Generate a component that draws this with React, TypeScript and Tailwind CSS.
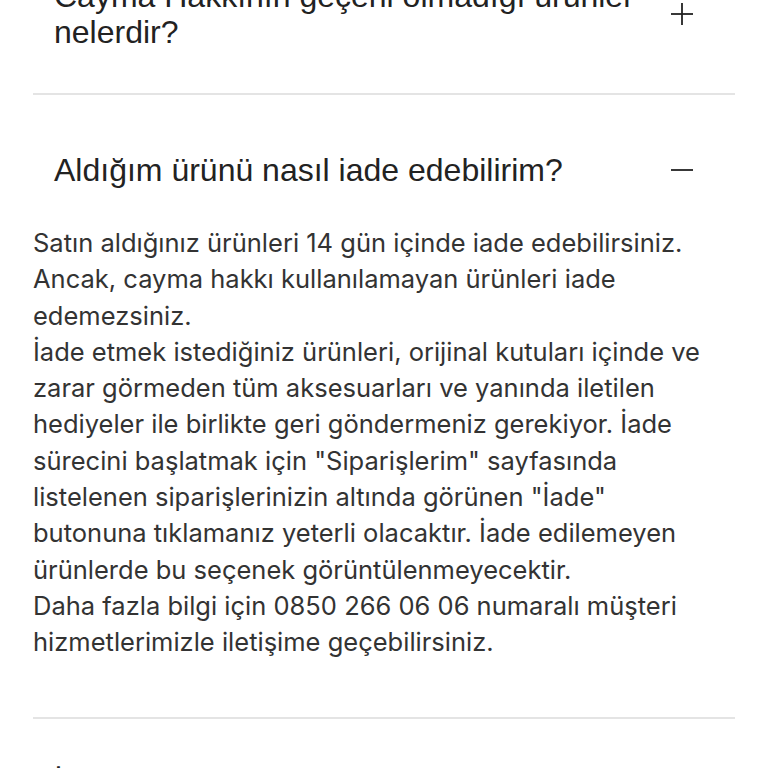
const body = [
  "Satın aldığınız ürünleri 14 gün içinde iade edebilirsiniz. Ancak, cayma hakkı kullanılamayan ürünleri iade edemezsiniz.",
  'İade etmek istediğiniz ürünleri, orijinal kutuları içinde ve zarar görmeden tüm aksesuarları ve yanında iletilen hediyeler ile birlikte geri göndermeniz gerekiyor. İade sürecini başlatmak için "Siparişlerim" sayfasında listelenen siparişlerinizin altında görünen "İade" butonuna tıklamanız yeterli olacaktır. İade edilemeyen ürünlerde bu seçenek görüntülenmeyecektir.',
  "Daha fazla bilgi için 0850 266 06 06 numaralı müşteri hizmetlerimizle iletişime geçebilirsiniz.",
];

function Toggle({ open }: { open?: boolean }) {
  return (
    <svg viewBox="0 0 22 22" className="h-[22px] w-[22px] shrink-0 text-[#222]" fill="none" stroke="currentColor" strokeWidth={1.8}>
      <line x1="0" y1="11" x2="22" y2="11" />
      {!open && <line x1="11" y1="0" x2="11" y2="22" />}
    </svg>
  );
}

function Header({ title, open }: { title: string; open?: boolean }) {
  return (
    <button
      type="button"
      className="flex w-full items-center justify-between pl-[21px] pr-[42px] text-left"
    >
      <span className="max-w-[590px] font-['Liberation_Sans',sans-serif] text-[32px] leading-[36px] text-[#222]">
        {title}
      </span>
      <Toggle open={open} />
    </button>
  );
}

export default function App() {
  return (
    <div className="h-[768px] overflow-hidden bg-white font-['Inter',sans-serif]">
      <div className="-mt-[67px] px-[33px]">
        <div className="border-b-2 border-[#e4e4e4] pt-[45px] pb-[43px]">
          <Header title="Cayma Hakkının geçerli olmadığı ürünler nelerdir?" />
        </div>

        <div className="border-b-2 border-[#e4e4e4] pt-[57px] pb-[56px]">
          <Header title="Aldığım ürünü nasıl iade edebilirim?" open />
          <div className="mt-[37px] pr-[20px] text-[25.5px] leading-[36.3px] text-[#333]">
            {body.map((p, i) => (
              <p key={i}>{p}</p>
            ))}
          </div>
        </div>

        <div className="border-b-2 border-[#e4e4e4] pt-[46px] pb-[43px]">
          <Header title="İade ettiğim ürünün ücreti ne zaman hesabıma geçer?" />
        </div>
      </div>
    </div>
  );
}
